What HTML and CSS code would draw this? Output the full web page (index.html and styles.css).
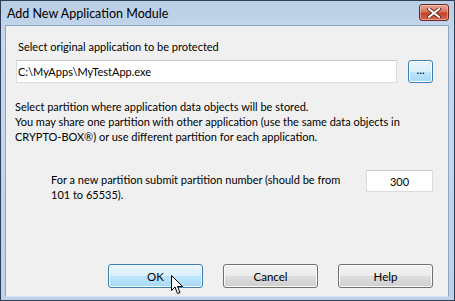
FILE: index.html
```html
<!DOCTYPE html>
<html lang="en">
<head>
    <meta charset="UTF-8">
    <title>Add New Application Module</title>
    <link rel="stylesheet" href="styles.css">
</head>
<body>
<div class="window">
    <div class="titlebar">
        <span class="title">Add New Application Module</span>
        <div class="close">
            <svg width="14" height="10" viewBox="0 0 14 10">
                <path d="M2 1 L12 9 M12 1 L2 9" stroke="#5a1a14" stroke-width="3.6" stroke-linecap="square"/>
                <path d="M2 1 L12 9 M12 1 L2 9" stroke="#fff" stroke-width="2" stroke-linecap="square"/>
            </svg>
        </div>
    </div>
    <div class="client">
        <div class="label">Select original application to be protected</div>
        <div class="path-row">
            <input type="text" class="field path" value="C:\MyApps\MyTestApp.exe">
            <button class="btn browse">...</button>
        </div>
        <p class="info">Select partition where application data objects will be stored.<br>
            You may share one partition with other application (use the same data objects in
            CRYPTO-BOX®) or use different partition for each application.</p>
        <div class="partition-row">
            <p class="partition-text">For a new partition submit partition number (should be from 101 to 65535).</p>
            <input type="text" class="field partition" value="300">
        </div>
        <div class="buttons">
            <div class="ok-wrap">
                <button class="btn hot">OK</button>
                <svg class="cursor" width="13" height="20" viewBox="0 0 13 20">
                    <path d="M0.5 0.5 L0.5 15.5 L4 12 L6.5 18.5 L9 17.5 L6.5 11.5 L11.5 11.5 Z" fill="#fff" stroke="#000" stroke-width="1"/>
                </svg>
            </div>
            <button class="btn">Cancel</button>
            <button class="btn">Help</button>
        </div>
    </div>
</div>
</body>
</html>
```

FILE: styles.css
```css
body {
    margin: 0;
    font-family: Lato, "Noto Sans", sans-serif;
    font-size: 11px;
    color: #000;
}

.window {
    width: 455px;
    height: 301px;
    box-sizing: border-box;
    border: 1px solid #2f3e52;
    background: linear-gradient(#b9cde5, #c6d9ee 40px, #bcd2ea);
    padding: 0 5px 3px 4px;
    display: flex;
    flex-direction: column;
    position: relative;
}

.titlebar {
    height: 24px;
    display: flex;
    align-items: center;
    justify-content: space-between;
}

.title {
    font-size: 12.5px;
    padding-left: 2px;
    color: #000;
}

.close {
    width: 30px;
    height: 17px;
    margin-top: -1px;
    box-sizing: border-box;
    border: 1px solid #6b2a24;
    border-radius: 3px;
    background: linear-gradient(#e8a595, #d7735d 45%, #c3432a 55%, #d86a50);
    display: flex;
    align-items: center;
    justify-content: center;
    box-shadow: inset 0 0 0 1px rgba(255, 255, 255, 0.35);
}

.client {
    flex: 1;
    background-color: #f0f0f0;
    border: 1px solid #8ea6c2;
    border-bottom-color: #d8e6f2;
    padding: 13px 15px 0 9px;
    position: relative;
    box-sizing: border-box;
}

.label {
    margin-left: 3px;
    line-height: 15px;
}

.path-row {
    display: flex;
    align-items: center;
    margin-top: 6px;
    margin-left: 1px;
}

.field {
    box-sizing: border-box;
    height: 23px;
    border: 1px solid #dcdcdc;
    border-top-color: #c8c8c8;
    background: #fff;
    font-family: inherit;
    font-size: 11px;
    padding: 0 1px;
    outline: none;
    margin: 0;
}

.path {
    width: 383px;
}

.btn {
    box-sizing: border-box;
    width: 95px;
    height: 24px;
    border: 1px solid #707070;
    border-radius: 3px;
    background: linear-gradient(#f2f2f2, #ebebeb 50%, #dddddd 50%, #cfcfcf);
    box-shadow: inset 0 0 0 1px #fbfbfb;
    font-family: inherit;
    font-size: 11.5px;
    padding: 0;
    color: #000;
}

.browse {
    width: 25px;
    height: 23px;
    margin-left: 11px;
    border-color: #3c7fb1;
    background: linear-gradient(#eaf6fd, #d9f0fc 50%, #bee6fd 50%, #a7d9f5);
    box-shadow: inset 0 0 0 1px #fff;
    padding-bottom: 4px;
}

.btn.hot {
    border-color: #3c7fb1;
    background: linear-gradient(#eaf6fd, #d9f0fc 50%, #bee6fd 50%, #a7d9f5);
}

.info {
    margin: 16px 0 0 0;
    line-height: 15px;
}

.partition-row {
    display: flex;
    align-items: flex-start;
    margin-top: 26px;
}

.partition-text {
    margin: 2px 0 0 36px;
    width: 295px;
    line-height: 15px;
}

.partition {
    width: 67px;
    height: 22px;
    margin-left: auto;
    margin-right: 0;
    text-align: center;
}

.buttons {
    display: flex;
    justify-content: flex-end;
    gap: 20px;
    margin-top: 62px;
}

.ok-wrap {
    position: relative;
}

.cursor {
    position: absolute;
    left: 63px;
    top: 11px;
}
```
